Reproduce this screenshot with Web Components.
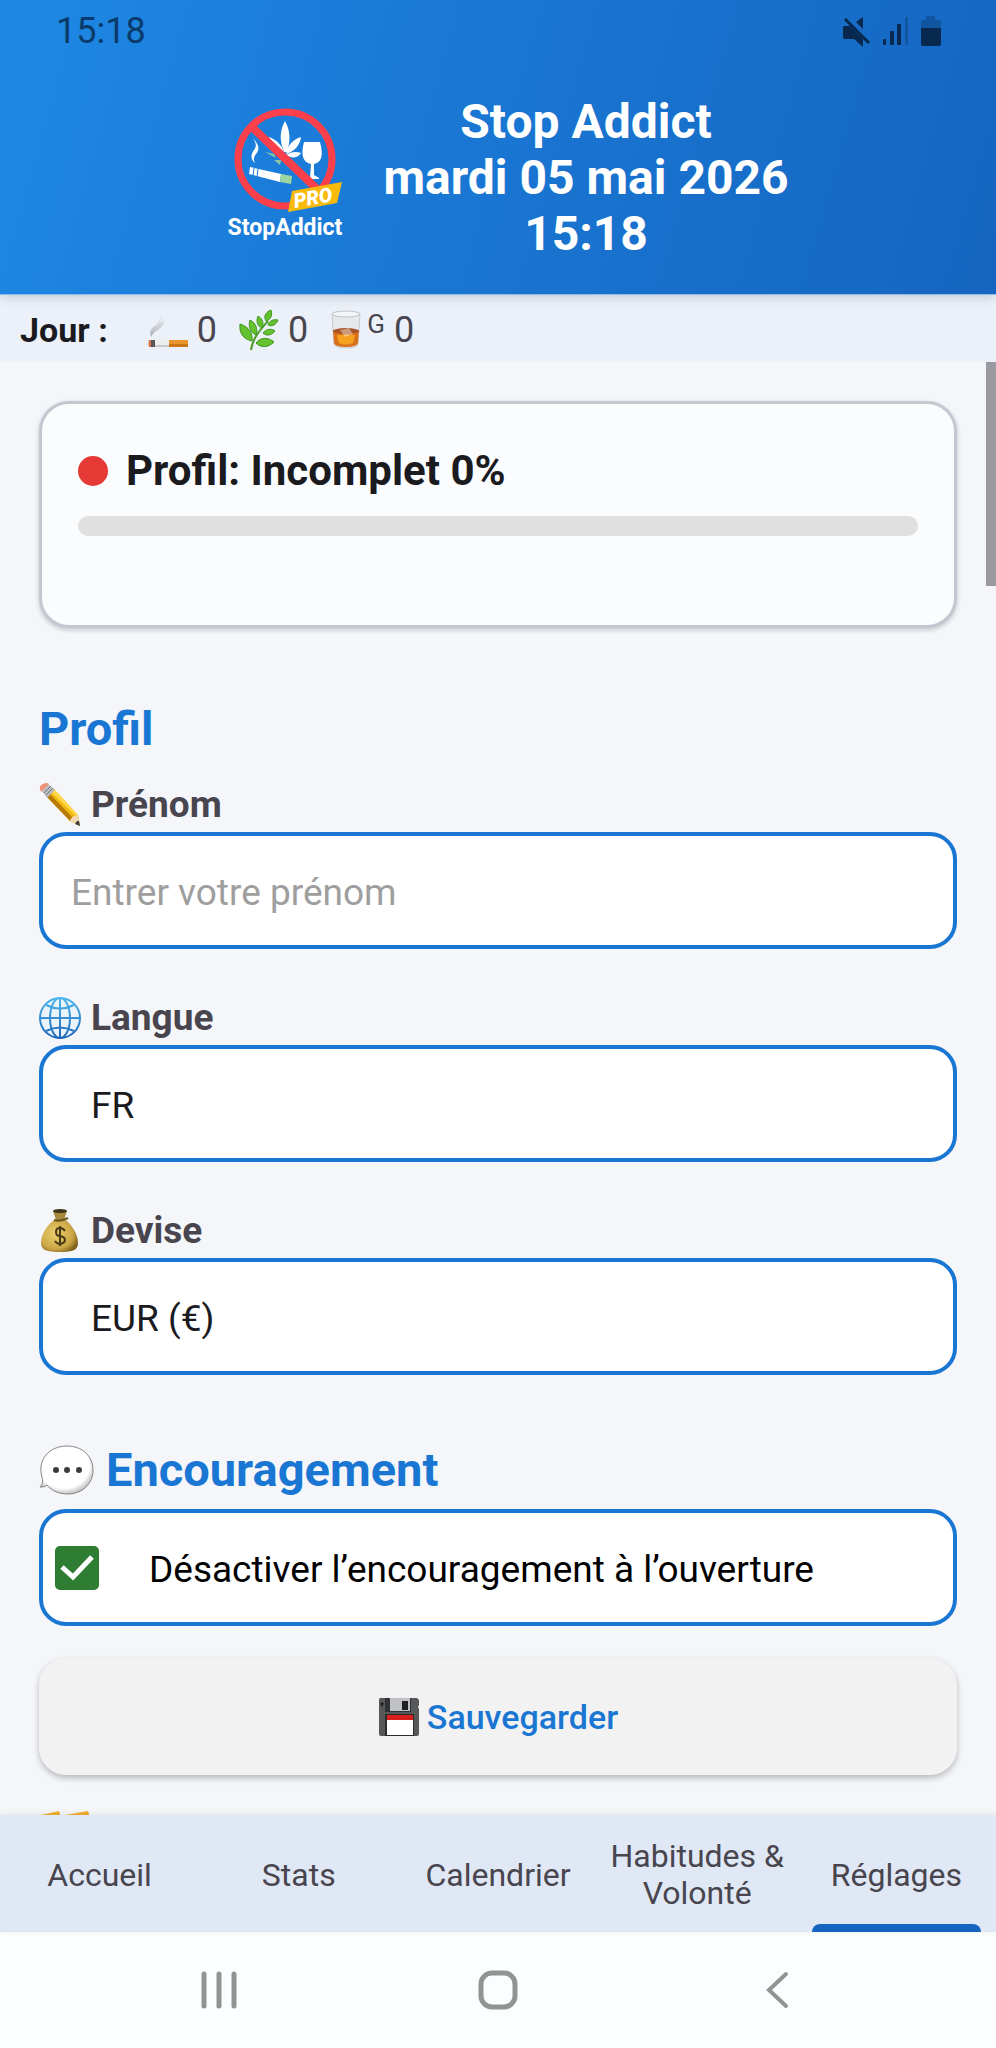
<!DOCTYPE html>
<html lang="fr">
<head>
<meta charset="utf-8">
<meta name="viewport" content="width=device-width, initial-scale=1">
<title>Stop Addict - Réglages</title>
<style>
  body {
    margin: 0;
    font-family: Roboto, "Noto Sans", sans-serif;
    color: #1b1b1f;
  }
</style>
</head>
<body>

<stop-addict-app></stop-addict-app>

<script>
function makeTemplate(html) {
  const template = document.createElement("template")
  template.innerHTML = html
  return template
}

class BaseElement extends HTMLElement {
  constructor() {
    super()
    this.attachShadow({ mode: "open" })
    this.shadowRoot.appendChild(this.constructor.template.content.cloneNode(true))
  }

  $(selector) {
    return this.shadowRoot.querySelector(selector)
  }
}

// drawings, one svg per name

const drawings = {
  cigarette: /*html*/`
    <svg width="40" height="42" viewBox="0 0 40 42">
      <defs>
        <linearGradient id="smoke" x1="0" y1="1" x2="0" y2="0">
          <stop offset="0" stop-color="#a9acb2"/><stop offset="1" stop-color="#e8ecf2" stop-opacity="0.4"/>
        </linearGradient>
      </defs>
      <path d="M3 28c-3-8 2-9 6-13 4-5 3-8 2-12 4 4 3 7 1 11 3-1 4-3 3-6 3 6-1 10-5 13-4 2-5 4-7 7z" fill="url(#smoke)"/>
      <rect x="0" y="31" width="40" height="7" rx="1" fill="#eceded"/>
      <path d="M1 31h3v7H1q-1-3 0-7z" fill="#d7714c"/>
      <rect x="3" y="31" width="4" height="7" fill="#5a5757"/>
      <rect x="21" y="31" width="19" height="7" rx="1" fill="#e9952b"/>
      <rect x="21" y="35" width="19" height="3" fill="#c97715"/>
      <rect x="7" y="36" width="14" height="2" fill="#c9cacc"/>
    </svg>`,
  herb: /*html*/`
    <svg width="40" height="42" viewBox="0 0 40 42">
      <path d="M12 41C14 28 22 20 29 12" fill="none" stroke="#4f9a2a" stroke-width="2"/>
      <g fill="#63c22e" stroke="#3f9420" stroke-width="1">
        <path d="M32 1c2 6-1 10-5 11-3-5 0-9 5-11z"/>
        <path d="M39 11c-2 5-6 7-10 5 1-4 5-6 10-5z"/>
        <path d="M19 7c5 3 6 8 4 12-5-2-6-7-4-12z"/>
        <path d="M36 22c-4 5-9 5-12 2 3-4 8-5 12-2z"/>
        <path d="M11 11c6 3 8 9 6 15-6-3-8-9-6-15z"/>
        <path d="M1 15c9 3 13 9 12 17C4 30 0 24 1 15z"/>
        <path d="M35 33c-6 6-13 6-18 1 5-6 12-6 18-1z"/>
      </g>
    </svg>`,
  tumbler: /*html*/`
    <svg width="32" height="42" viewBox="0 0 32 42">
      <path d="M2 5h28l-2 30q-1 4-12 4T4 35z" fill="#e6e8ec" stroke="#c6c9ce" stroke-width="1"/>
      <path d="M3 21h26l-1 13q-1 4-12 4T4 34z" fill="#d9711b"/>
      <path d="M7 26h18l-2 8q-7 3-14 0z" fill="#f6a21f"/>
      <ellipse cx="16" cy="22" rx="13" ry="3" fill="#a95426"/>
      <path d="M10 21l9-2 4 6-8 3z" fill="#fff" opacity="0.4"/>
      <ellipse cx="16" cy="5" rx="14" ry="3" fill="#f4f5f7" stroke="#bfc2c6" stroke-width="1"/>
    </svg>`,
  pencil: /*html*/`
    <svg width="42" height="46" viewBox="0 0 42 46">
      <path d="M7 14L14 6 39 33 41 44 31 39z" fill="#f0b90d"/>
      <path d="M7 14l3-3 25 26-4 2z" fill="#b97b08"/>
      <path d="M11 9l3-3 25 27-2 1z" fill="#ffd84a"/>
      <path d="M31 39q1-5 8-6l2 11z" fill="#f2d9ae"/>
      <path d="M38 39l2 0 1 5-5-2z" fill="#3d3b38"/>
      <path d="M3 9l6-7 7 6-8 8z" fill="#b9bcc0"/>
      <path d="M5 11l7-7M7 13l7-7" stroke="#77797c" stroke-width="1"/>
      <path d="M1 7Q0 4 4 2t6 0L2 10z" fill="#f09275"/>
    </svg>`,
  globe: /*html*/`
    <svg width="42" height="46" viewBox="0 0 42 46">
      <defs>
        <linearGradient id="sea" gradientUnits="userSpaceOnUse" x1="0" y1="2" x2="0" y2="44">
          <stop offset="0" stop-color="#4fb9ee"/><stop offset="1" stop-color="#1d62b5"/>
        </linearGradient>
      </defs>
      <circle cx="21" cy="23" r="19" fill="#e9f3fc"/>
      <g fill="none" stroke="url(#sea)" stroke-width="2">
        <circle cx="21" cy="23" r="20"/>
        <ellipse cx="21" cy="23" rx="10" ry="20"/>
        <path d="M21 3v40.1M1 23h40v0.1M7 10q14 7 28 0M7 36q14-7 28 0"/>
      </g>
    </svg>`,
  moneybag: /*html*/`
    <svg width="42" height="46" viewBox="0 0 42 46">
      <defs>
        <radialGradient id="gold" cx="0.4" cy="0.45" r="0.65">
          <stop offset="0" stop-color="#ecd06f"/><stop offset="0.7" stop-color="#cba646"/><stop offset="1" stop-color="#80601c"/>
        </radialGradient>
      </defs>
      <path d="M17 11C9 15 2 26 2 35c0 7 6 9 19 9s18-2 18-9c0-9-7-20-14-24z" fill="url(#gold)"/>
      <path d="M14 3q7-3 14 0l-3 9h-8z" fill="#a88a3d"/>
      <ellipse cx="21" cy="3" rx="7" ry="2" fill="#40351a"/>
      <path d="M15 12q6 2 14-2" fill="none" stroke="#6a531f" stroke-width="2"/>
      <path d="M26 23q-2-3-5-3-4 0-4 4t4 4q5 1 5 4t-5 4q-3 0-5-3M21 18v20" fill="none" stroke="#4a3a14" stroke-width="2"/>
    </svg>`,
  bubble: /*html*/`
    <svg width="56" height="56" viewBox="0 0 56 56">
      <defs>
        <radialGradient id="pearl" cx="0.45" cy="0.4" r="0.6">
          <stop offset="0.8" stop-color="#fff"/><stop offset="1" stop-color="#c4c4c4"/>
        </radialGradient>
      </defs>
      <path d="M28 4c15 0 26 10 26 24S43 52 29 52c-9 0-16-3-21-9-2 2-4 2-7 2 3-3 3-6 2-10C-2 18 10 4 28 4z" fill="url(#pearl)" stroke="#858585" stroke-width="1"/>
      <g fill="#3b3b3b"><circle cx="17" cy="28" r="3"/><circle cx="28" cy="28" r="3"/><circle cx="40" cy="28" r="3"/></g>
    </svg>`,
  floppy: /*html*/`
    <svg width="42" height="40" viewBox="0 0 42 40">
      <path d="M2 1h37l2 2v5l-1 2 1 2v25q0 2-2 2H3q-2 0-2-2V3q0-2 1-2z" fill="#57585a"/>
      <rect x="7" y="1" width="26" height="14" fill="#303134"/>
      <rect x="12" y="1" width="20" height="13" fill="#bfc1c4"/>
      <rect x="24" y="4" width="6" height="9" fill="#1f2022"/>
      <path d="M4 5v5M2 7h4" stroke="#111" stroke-width="1"/>
      <rect x="7" y="17" width="29" height="22" fill="#2c2c2e"/>
      <rect x="9" y="18" width="26" height="20" fill="#fff"/>
      <rect x="9" y="18" width="26" height="5" fill="#d91f1c"/>
    </svg>`,
  folders: /*html*/`
    <svg width="52" height="42" viewBox="0 0 52 42">
      <path d="M2 5l18-4 1 3v30H2zM26 5l23-4 1 3v30H26z" fill="#f2ae2d"/>
    </svg>`,
  muted: /*html*/`
    <svg width="28" height="32" viewBox="0 0 28 32">
      <path d="M1 11h6l13 13v8l-9-8H1q-1-1-1-2V12q0-1 1-1zM20 2v12l-7-7z" fill="currentColor"/>
      <path d="M2 4l24 24" stroke="currentColor" stroke-width="3"/>
    </svg>`,
  signal: /*html*/`
    <svg width="26" height="32" viewBox="0 0 26 32">
      <g fill="currentColor">
        <rect x="0" y="24" width="3" height="6" rx="1"/>
        <rect x="7" y="16" width="4" height="14" rx="1"/>
        <rect x="14" y="9" width="4" height="21" rx="1"/>
        <rect x="22" y="2" width="3" height="28" rx="1" opacity="0.3"/>
      </g>
    </svg>`,
  battery: /*html*/`
    <svg width="20" height="32" viewBox="0 0 20 32">
      <path d="M5 1h9v4h4q2 0 2 2v6H0V7q0-2 2-2h3z" fill="currentColor" opacity="0.3"/>
      <path d="M0 13h20v16q0 2-2 2H2q-2 0-2-2z" fill="currentColor"/>
    </svg>`,
  recents: /*html*/`
    <svg width="40" height="40" viewBox="0 0 40 40">
      <path d="M5 4v32M20 4v32M35 4v32" fill="none" stroke="currentColor" stroke-width="5" stroke-linecap="round"/>
    </svg>`,
  home: /*html*/`
    <svg width="40" height="40" viewBox="0 0 40 40">
      <rect x="3" y="3" width="34" height="34" rx="11" fill="none" stroke="currentColor" stroke-width="5"/>
    </svg>`,
  back: /*html*/`
    <svg width="40" height="40" viewBox="0 0 40 40">
      <path d="M29 4L12 20l17 16" fill="none" stroke="currentColor" stroke-width="4" stroke-linecap="round"/>
    </svg>`
}

class DrawnIcon extends HTMLElement {
  constructor() {
    super()
    this.attachShadow({ mode: "open" })
  }

  connectedCallback() {
    this.shadowRoot.innerHTML = `
      <style>
        :host { display: inline-flex; flex: none; }
        svg { display: block; }
      </style>
      ${drawings[this.getAttribute("name")]}
    `
    this.setAttribute("aria-hidden", "true")
  }
}

class AppLogo extends BaseElement {
  static template = makeTemplate(/*html*/`
    <style>
      :host { display: block; flex: none; }
      svg { display: block; }
      text { font-family: Roboto, sans-serif; font-weight: 700; fill: #fff; }
      .pro { font-weight: 900; font-style: italic; }
    </style>
    <svg width="156" height="156" viewBox="0 0 156 156" role="img" aria-label="StopAddict Pro">
      <path d="M46 38c6 7 7 11 3 16-2 3-3 5-1 9-5-4-4-9-1-13 3-4 2-7-1-12z" fill="#fff"/>
      <g fill="#fff">
        <path d="M78 21c5 9 6 19 2 31h-3c-5-12-4-22 1-31z"/>
        <path d="M62 37c8 3 13 8 15 16-8-2-12-8-15-16z"/>
        <path d="M94 37c-1 8-6 14-15 17 1-8 7-15 15-17z"/>
        <path d="M79 55c7-4 11-3 15-2-3 5-9 6-15 2z"/>
        <path d="M97 42h16c4 14 1 21-6 22l0 11 5 3v1h-9l1-15c-9-2-10-10-7-22z"/>
      </g>
      <path d="M58 52l9 2 2 4zM67 60l7 0-1 5z" fill="#8cc6a5"/>
      <path d="M43 67l31 7-1 8-31-8z" fill="#fff"/>
      <path d="M47 68l-1 8M51 69l-1 8" stroke="#1b78d8" stroke-width="1"/>
      <path d="M74 74l11 2-1 8-11-2z" fill="#9bd6a1"/>
      <circle cx="78" cy="59" r="47" fill="none" stroke="#fb404b" stroke-width="7"/>
      <path d="M46 28l64 61" stroke="#fb404b" stroke-width="8"/>
      <path d="M85 91l50-9-5 21-49 9z" fill="#f9ba0b"/>
      <text class="pro" font-size="20" transform="translate(88 108) rotate(-10)">PRO</text>
      <text x="78" y="135" font-size="23" text-anchor="middle">StopAddict</text>
    </svg>
  `)
}

class AppHeader extends BaseElement {
  static template = makeTemplate(/*html*/`
    <style>
      :host {
        display: block;
        flex: none;
        position: relative;
        z-index: 1;
        color: #fff;
        background: linear-gradient(106deg, #1e88e5, #1976d2 50%, #1565c0);
        box-shadow: 0 1px 0 #8dbbee, 0 2px 12px rgba(0, 0, 0, 0.2);
      }
      .status {
        display: flex;
        align-items: center;
        justify-content: space-between;
        padding: 10px 55px 0 56px;
        font-size: 36px;
        line-height: 42px;
        color: #0a3a69;
      }
      .icons {
        display: flex;
        gap: 12px;
        color: #07294f;
      }
      .brand {
        display: flex;
        align-items: center;
        justify-content: center;
        gap: 20px;
        padding: 42px 20px 32px;
      }
      h1 {
        margin: 0;
        font-size: 48px;
        line-height: 56px;
        font-weight: 700;
        text-align: center;
      }
    </style>
    <div class="status">
      <span>15:18</span>
      <div class="icons">
        <drawn-icon name="muted"></drawn-icon>
        <drawn-icon name="signal"></drawn-icon>
        <drawn-icon name="battery"></drawn-icon>
      </div>
    </div>
    <div class="brand">
      <app-logo></app-logo>
      <h1><slot></slot></h1>
    </div>
  `)
}

class DayBar extends BaseElement {
  static template = makeTemplate(/*html*/`
    <style>
      :host {
        display: flex;
        align-items: center;
        flex: none;
        gap: 40px;
        padding: 12px 20px 8px;
        background: #ecf1f9;
        font-size: 34px;
        line-height: 48px;
      }
      .counts {
        display: flex;
        gap: 22px;
        font-size: 36px;
        color: #49454f;
      }
      .count {
        display: flex;
        align-items: center;
        gap: 9px;
      }
      sup {
        align-self: flex-start;
        font-size: 26px;
        line-height: 30px;
      }
      .glass {
        gap: 5px;
      }
    </style>
    <strong>Jour :</strong>
    <div class="counts">
      <span class="count"><drawn-icon name="cigarette"></drawn-icon>0</span>
      <span class="count"><drawn-icon name="herb"></drawn-icon>0</span>
      <span class="count"><span class="count glass"><drawn-icon name="tumbler"></drawn-icon><sup>G</sup></span>0</span>
    </div>
  `)
}

class ProfileCard extends BaseElement {
  static template = makeTemplate(/*html*/`
    <style>
      :host {
        display: block;
        padding: 43px 36px 89px;
        border: 3px solid #c5c6d0;
        border-radius: 30px;
        background: #fbfcfe;
        box-shadow: 0 2px 5px rgba(0, 0, 0, 0.2);
      }
      .title {
        display: flex;
        align-items: center;
        gap: 18px;
        font-size: 42px;
        line-height: 48px;
        font-weight: 700;
      }
      .dot {
        width: 30px;
        height: 30px;
        border-radius: 50%;
        background: #e53935;
      }
      progress {
        display: block;
        appearance: none;
        width: 100%;
        height: 20px;
        margin-top: 21px;
        border: 0;
        border-radius: 10px;
        overflow: hidden;
        background: #e0e0e0;
      }
      progress::-webkit-progress-bar { background: #e0e0e0; }
      progress::-webkit-progress-value { background: #e53935; }
    </style>
    <div class="title"><span class="dot"></span><label for="bar"><slot></slot></label></div>
    <progress id="bar" max="100" value="0"></progress>
  `)
}

class SectionTitle extends BaseElement {
  static template = makeTemplate(/*html*/`
    <style>
      :host { display: block; }
      h2 {
        display: flex;
        align-items: center;
        gap: 11px;
        margin: 0;
        font-size: 47px;
        line-height: 56px;
        font-weight: 700;
        color: #1976d2;
      }
    </style>
    <h2><slot name="icon"></slot><slot></slot></h2>
  `)
}

const fieldStyle = /*html*/`
  <style>
    :host { display: block; }
    label {
      display: flex;
      align-items: center;
      gap: 10px;
      height: 42px;
      margin-bottom: 6px;
      font-size: 37px;
      line-height: 42px;
      font-weight: 700;
      color: #49454f;
    }
    input, select {
      display: block;
      box-sizing: border-box;
      appearance: none;
      width: 100%;
      height: 117px;
      padding: 4px 28px 0;
      border: 4px solid #1976d2;
      border-radius: 27px;
      outline: none;
      background: #fff;
      font: 400 37px Roboto, "Noto Sans", sans-serif;
      color: #1b1b1f;
    }
    select { padding-left: 48px; }
    input::placeholder { color: #9e9e9e; opacity: 1; }
  </style>
`

class TextField extends BaseElement {
  static template = makeTemplate(/*html*/`
    ${fieldStyle}
    <label for="control"><slot name="icon"></slot><slot></slot></label>
    <input id="control" type="text">
  `)

  connectedCallback() {
    this.$("input").placeholder = this.getAttribute("placeholder")
  }
}

class SelectField extends BaseElement {
  static template = makeTemplate(/*html*/`
    ${fieldStyle}
    <label for="control"><slot name="icon"></slot><slot></slot></label>
    <select id="control"></select>
  `)

  connectedCallback() {
    const select = this.$("select")
    select.innerHTML = ""
    this.getAttribute("options").split("|").forEach(text => select.add(new Option(text)))
  }
}

class CheckField extends BaseElement {
  static template = makeTemplate(/*html*/`
    <style>
      :host {
        display: flex;
        align-items: center;
        gap: 50px;
        box-sizing: border-box;
        min-height: 117px;
        padding: 0 12px;
        border: 4px solid #1976d2;
        border-radius: 27px;
        background: #fff;
        font-size: 37px;
        line-height: 42px;
        color: #000;
      }
      .box {
        display: grid;
        flex: none;
      }
      .box > * { grid-area: 1 / 1; }
      input {
        appearance: none;
        width: 44px;
        height: 44px;
        margin: 0;
        border: 3px solid #2e7d32;
        border-radius: 5px;
      }
      input:checked { background: #2e7d32; }
      svg { pointer-events: none; }
      input:not(:checked) + svg { visibility: hidden; }
      label { padding-top: 4px; }
    </style>
    <div class="box">
      <input id="control" type="checkbox" checked>
      <svg width="44" height="44" viewBox="0 0 44 44"><path d="M7 21l11 10 19-20" fill="none" stroke="#fff" stroke-width="5"/></svg>
    </div>
    <label for="control"><slot></slot></label>
  `)
}

class SaveButton extends BaseElement {
  static template = makeTemplate(/*html*/`
    <style>
      :host { display: block; }
      button {
        display: flex;
        align-items: center;
        justify-content: center;
        gap: 7px;
        width: 100%;
        height: 117px;
        border: 0;
        border-radius: 27px;
        background: #f2f2f2;
        box-shadow: 0 3px 6px rgba(0, 0, 0, 0.25);
        font: 500 34px Roboto, "Noto Sans", sans-serif;
        color: #1976d2;
      }
    </style>
    <button type="button"><slot name="icon"></slot><slot></slot></button>
  `)
}

class TabBar extends BaseElement {
  static template = makeTemplate(/*html*/`
    <style>
      :host {
        display: block;
        flex: none;
        position: relative;
        background: #dfe8f4;
        box-shadow: 0 -1px 6px rgba(0, 0, 0, 0.08);
      }
      nav {
        display: grid;
        grid-template-columns: repeat(5, 1fr);
        height: 117px;
      }
      a {
        display: grid;
        grid-template-rows: 1fr;
        place-items: center;
        font-size: 32px;
        line-height: 37px;
        text-align: center;
        text-decoration: none;
        color: #49454f;
      }
      a > span, a::after { grid-area: 1 / 1; }
      a > span { padding-top: 3px; }
      a[aria-current]::after {
        content: "";
        place-self: end stretch;
        height: 8px;
        margin: 0 15px;
        border-radius: 8px 8px 0 0;
        background: #1565c0;
      }
    </style>
    <nav>
      <a href="#accueil"><span>Accueil</span></a>
      <a href="#stats"><span>Stats</span></a>
      <a href="#calendrier"><span>Calendrier</span></a>
      <a href="#habitudes"><span>Habitudes &amp; Volonté</span></a>
      <a href="#reglages" aria-current="page"><span>Réglages</span></a>
    </nav>
  `)
}

class SystemBar extends BaseElement {
  static template = makeTemplate(/*html*/`
    <style>
      :host {
        display: flex;
        justify-content: center;
        flex: none;
        background: #fcfdff;
      }
      button {
        display: flex;
        align-items: center;
        justify-content: center;
        width: 28%;
        height: 116px;
        padding: 0;
        border: 0;
        background: none;
        color: #929493;
      }
    </style>
    <button type="button" aria-label="Applications récentes"><drawn-icon name="recents"></drawn-icon></button>
    <button type="button" aria-label="Écran d'accueil"><drawn-icon name="home"></drawn-icon></button>
    <button type="button" aria-label="Retour"><drawn-icon name="back"></drawn-icon></button>
  `)
}

class StopAddictApp extends BaseElement {
  static template = makeTemplate(/*html*/`
    <style>
      :host {
        display: flex;
        flex-direction: column;
        height: 100vh;
        background: #f4f6fa;
      }
      .body {
        display: flex;
        flex: 1;
        min-height: 0;
        position: relative;
      }
      main {
        flex: 1;
        padding: 39px;
        overflow-y: auto;
        scrollbar-width: none;
      }
      .thumb {
        position: absolute;
        top: 0;
        right: 0;
        width: 10px;
        height: 224px;
        background: #9b9aa0;
      }
      section { margin-top: 73px; }
      section + section { margin-top: 67px; }
      text-field { margin-top: 27px; }
      select-field { margin-top: 48px; }
      check-field { margin-top: 11px; }
      save-button { margin-top: 32px; }
      .next { margin-top: 35px; }
    </style>
    <app-header>Stop Addict<br>mardi 05 mai 2026<br>15:18</app-header>
    <day-bar></day-bar>
    <div class="body">
      <main>
        <profile-card>Profil: Incomplet 0%</profile-card>
        <section>
          <section-title>Profil</section-title>
          <text-field placeholder="Entrer votre prénom"><drawn-icon slot="icon" name="pencil"></drawn-icon>Prénom</text-field>
          <select-field options="FR"><drawn-icon slot="icon" name="globe"></drawn-icon>Langue</select-field>
          <select-field options="EUR (€)"><drawn-icon slot="icon" name="moneybag"></drawn-icon>Devise</select-field>
        </section>
        <section>
          <section-title><drawn-icon slot="icon" name="bubble"></drawn-icon>Encouragement</section-title>
          <check-field>Désactiver l’encouragement à l’ouverture</check-field>
          <save-button><drawn-icon slot="icon" name="floppy"></drawn-icon>Sauvegarder</save-button>
        </section>
        <drawn-icon class="next" name="folders"></drawn-icon>
      </main>
      <div class="thumb"></div>
    </div>
    <tab-bar></tab-bar>
    <system-bar></system-bar>
  `)
}

customElements.define("drawn-icon", DrawnIcon)
customElements.define("app-logo", AppLogo)
customElements.define("app-header", AppHeader)
customElements.define("day-bar", DayBar)
customElements.define("profile-card", ProfileCard)
customElements.define("section-title", SectionTitle)
customElements.define("text-field", TextField)
customElements.define("select-field", SelectField)
customElements.define("check-field", CheckField)
customElements.define("save-button", SaveButton)
customElements.define("tab-bar", TabBar)
customElements.define("system-bar", SystemBar)
customElements.define("stop-addict-app", StopAddictApp)
</script>
</body>
</html>
